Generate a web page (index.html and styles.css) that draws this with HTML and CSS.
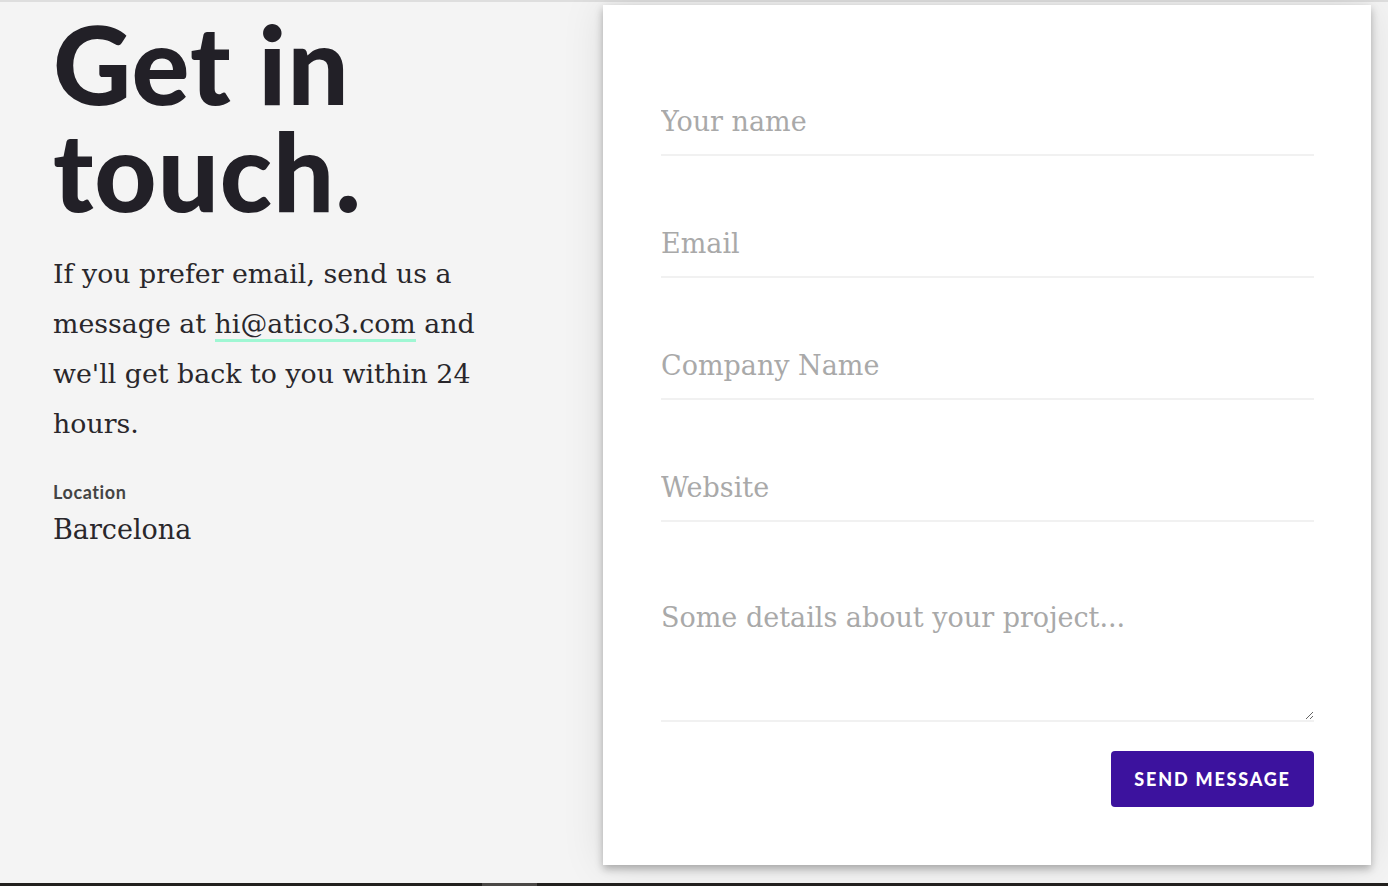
FILE: index.html
```html
<!DOCTYPE html>
<html lang="en">
<head>
<meta charset="utf-8">
<title>Get in touch</title>
<link rel="stylesheet" href="styles.css">
</head>
<body>
<div class="page">
  <main class="contact">
    <section class="intro">
      <h1 class="title">Get in<br>touch.</h1>
      <p class="lead">If you prefer email, send us a message at <a class="mail" href="#">hi@atico3.com</a> and we'll get back to you within 24 hours.</p>
      <div class="label">Location</div>
      <div class="city">Barcelona</div>
    </section>
    <section class="card">
      <form class="form">
        <input class="field" type="text" placeholder="Your name">
        <input class="field" type="email" placeholder="Email">
        <input class="field" type="text" placeholder="Company Name">
        <input class="field" type="text" placeholder="Website">
        <textarea class="field area" placeholder="Some details about your project..."></textarea>
        <div class="actions"><button class="send" type="button">SEND MESSAGE</button></div>
      </form>
    </section>
  </main>
  <div class="bottombar"><span class="thumb"></span></div>
</div>
</body>
</html>
```
FILE: styles.css
```css
* { box-sizing: border-box; }
html, body { margin: 0; padding: 0; }
body {
  background: #f4f4f4;
  width: 1388px;
  height: 886px;
  overflow: hidden;
  font-family: "DejaVu Serif", serif;
  color: #29272b;
}
.page {
  height: 886px;
  display: flex;
  flex-direction: column;
  border-top: 2px solid #dedede;
}
.contact {
  flex: 1;
  display: flex;
  min-height: 0;
}
.intro {
  width: 603px;
  padding: 8px 0 0 53px;
}
.title {
  margin: 0;
  font-family: Lato, sans-serif;
  font-weight: 900;
  font-size: 108px;
  line-height: 107px;
  color: #222027;
  letter-spacing: 1px;
}
.lead {
  margin: 25px 0 0;
  width: 460px;
  font-size: 26.8px;
  line-height: 50px;
  color: #29272b;
}
.mail {
  color: inherit;
  text-decoration: none;
  border-bottom: 3px solid #9ff7d3;
}
.label {
  margin-top: 32px;
  font-family: Lato, sans-serif;
  font-weight: 700;
  font-size: 18px;
  letter-spacing: 0.6px;
  color: #444;
}
.city {
  margin-top: 11px;
  font-size: 27px;
  color: #29272b;
}
.card {
  width: 768px;
  height: 860px;
  margin-top: 3px;
  background: #fff;
  box-shadow: 0 4px 8px rgba(0,0,0,0.28), 0 0 40px rgba(0,0,0,0.10);
  padding: 95px 57px 0 58px;
}
.form {
  display: flex;
  flex-direction: column;
  gap: 66px;
}
.field {
  display: block;
  width: 100%;
  height: 56px;
  border: 0;
  border-bottom: 2px solid #f1f1f1;
  padding: 0 0 12px;
  font-family: "DejaVu Serif", serif;
  font-size: 27px;
  color: #333;
  background: transparent;
  outline: none;
}
.field::placeholder { color: #a9a9a9; }
.area {
  height: 128px;
  padding: 8px 0 0;
  resize: vertical;
  margin-top: 6px;
}
.actions {
  display: flex;
  justify-content: flex-end;
  margin-top: -37px;
}
.send {
  width: 203px;
  height: 56px;
  border: 0;
  border-radius: 4px;
  background: #3c129e;
  color: #fff;
  font-family: Lato, sans-serif;
  font-weight: 900;
  font-size: 18px;
  letter-spacing: 1.8px;
}
.bottombar {
  height: 3px;
  background: #22201e;
  padding-left: 482px;
}
.thumb {
  display: block;
  width: 55px;
  height: 3px;
  background: #4a4846;
}
```
